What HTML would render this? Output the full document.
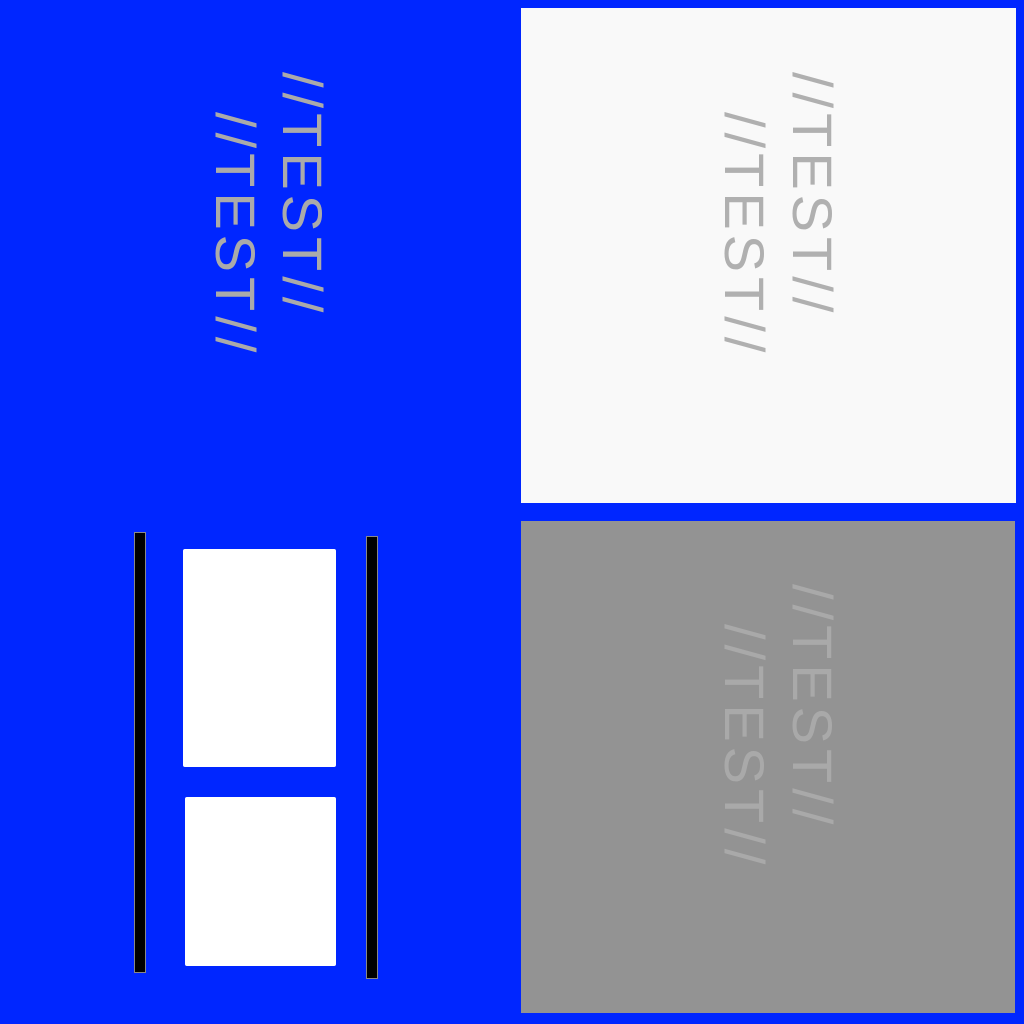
<!DOCTYPE html>
<html><head><style>
html,body{margin:0;padding:0}
body{width:1024px;height:1024px;background:#0026ff;position:relative;overflow:hidden}
.a{position:absolute}
.t{position:absolute;writing-mode:vertical-rl;font-family:"Liberation Sans",sans-serif;font-size:56px;line-height:56px;width:56px;letter-spacing:5px;white-space:nowrap}
.bar{position:absolute;background:#000;border:1px solid #888;box-sizing:border-box}
.box{position:absolute;background:#fff;border-radius:2px}
</style></head><body>
<div class="a" style="left:521px;top:8px;width:495px;height:495px;background:#f9f9f9"></div>
<div class="a" style="left:521px;top:521px;width:494px;height:492px;background:#939393"></div>

<div class="t" style="left:274px;top:72px;color:#aaaaaa">//TEST//</div>
<div class="t" style="left:207px;top:112px;color:#aaaaaa">//TEST//</div>

<div class="t" style="left:784px;top:72px;color:#b0b0b0">//TEST//</div>
<div class="t" style="left:716px;top:112px;color:#b0b0b0">//TEST//</div>

<div class="t" style="left:784px;top:584px;color:#a9a9a9">//TEST//</div>
<div class="t" style="left:716px;top:624px;color:#a9a9a9">//TEST//</div>

<div class="bar" style="left:134px;top:532px;width:12px;height:441px"></div>
<div class="bar" style="left:366px;top:536px;width:12px;height:443px"></div>
<div class="box" style="left:183px;top:549px;width:153px;height:218px"></div>
<div class="box" style="left:185px;top:797px;width:151px;height:169px"></div>
</body></html>
